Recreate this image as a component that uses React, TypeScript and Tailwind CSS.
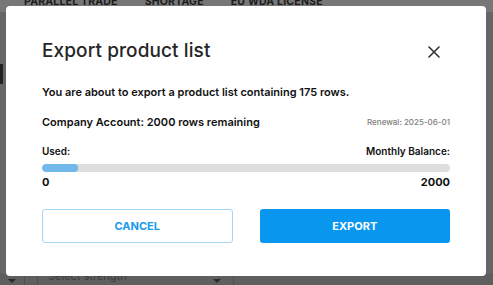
import React from "react";

export default function App() {
  return (
    <div
      className="relative w-[493px] h-[285px] overflow-hidden bg-[#666666]"
      style={{ fontFamily: "Inter, 'Noto Sans', sans-serif" }}
    >
      {/* dimmed page behind */}
      <div className="absolute inset-x-0 top-0 h-[12px] bg-[#777777]">
        <div className="flex gap-[27px] pl-[24px] -mt-[5px] text-[10.5px] font-bold tracking-[0.2px] text-[#1c1c1c] leading-[13px]">
          <span>PARALLEL TRADE</span>
          <span>SHORTAGE</span>
          <span>EU WDA LICENSE</span>
        </div>
      </div>
      <div className="absolute left-0 top-[64px] w-[3px] h-[20px] bg-[#222]" />
      <div className="absolute inset-x-0 bottom-0 h-[12px] bg-[#5f5f5f] flex items-start">
        <div className="w-[25px] h-full border-r border-[#505050] flex justify-center pt-[6px]">
          <div className="w-0 h-0 border-l-[4px] border-r-[4px] border-t-[4px] border-l-transparent border-r-transparent border-t-[#2a2a2a]" />
        </div>
        <div className="w-[13px] h-full border-r border-[#505050]" />
        <div className="w-[196px] h-full border-r border-[#505050] flex items-start justify-between pl-[10px] pr-[12px]">
          <span className="text-[11px] leading-[11px] -mt-[2px] text-[#3c3c3c]">Select strength</span>
          <div className="mt-[6px] w-0 h-0 border-l-[4px] border-r-[4px] border-t-[4px] border-l-transparent border-r-transparent border-t-[#2a2a2a]" />
        </div>
      </div>

      {/* modal */}
      <div className="absolute left-[6px] top-[6px] w-[480px] h-[270px] bg-white rounded-[4px] px-[36px] pt-[33px] flex flex-col">
        <div className="flex items-center justify-between h-[24px]">
          <h2 className="text-[19px] font-medium text-[#262626] leading-[24px] tracking-[0.1px]">
            Export product list
          </h2>
          <svg width="12" height="12" viewBox="0 0 12 12" className="mr-[10px] mt-[2px]">
            <path d="M1 1 L11 11 M11 1 L1 11" stroke="#333" strokeWidth="1.6" strokeLinecap="round" />
          </svg>
        </div>
        <p className="mt-[21px] text-[11px] font-semibold leading-[16px] text-[#111]">
          You are about to export a product list containing 175 rows.
        </p>
        <div className="mt-[14px] flex items-center justify-between h-[16px]">
          <span className="text-[11px] font-semibold text-[#111]">Company Account: 2000 rows remaining</span>
          <span className="text-[8px] font-medium text-[#808080]">Renewal: 2025-06-01</span>
        </div>
        <div className="mt-[14px] flex items-center justify-between h-[14px] text-[10px] font-semibold text-[#111]">
          <span>Used:</span>
          <span>Monthly Balance:</span>
        </div>
        <div className="mt-[6px] h-[8px] rounded-full bg-[#dddddd] overflow-hidden">
          <div className="h-full rounded-full bg-[#70b9ea]" style={{ width: "36px" }} />
        </div>
        <div className="mt-[3.5px] flex items-center justify-between h-[14px] text-[11px] font-bold text-[#111]">
          <span>0</span>
          <span>2000</span>
        </div>
        <div className="mt-[19.5px] grid grid-cols-2 gap-[27px]">
          <button className="h-[34px] rounded-[3px] border border-[#a6d6f7] text-[11px] font-bold text-[#1898ee] bg-white">
            CANCEL
          </button>
          <button className="h-[34px] rounded-[3px] bg-[#0896ee] text-[11px] font-bold text-white">
            EXPORT
          </button>
        </div>
      </div>
    </div>
  );
}
